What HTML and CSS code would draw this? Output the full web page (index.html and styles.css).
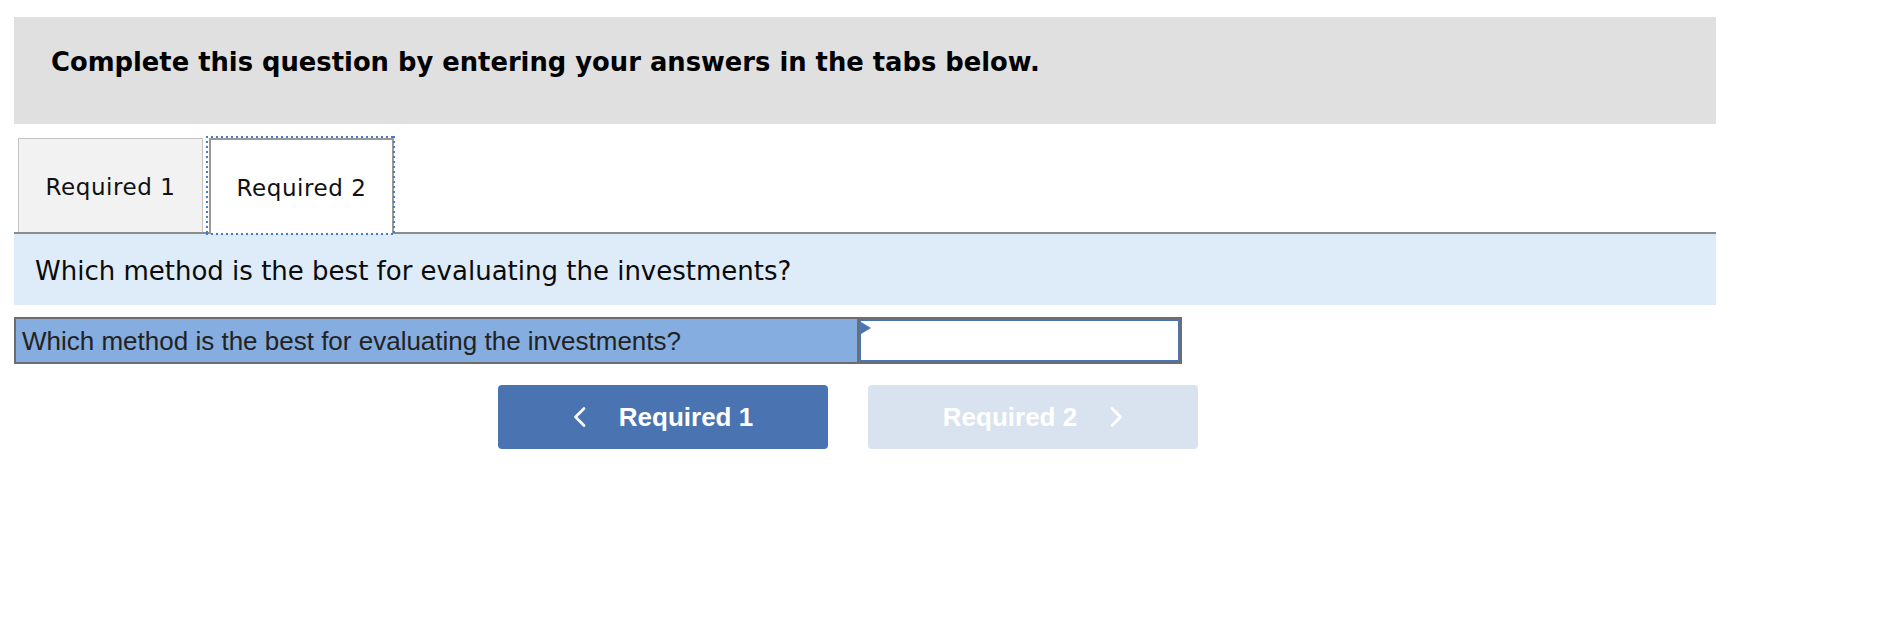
FILE: index.html
```html
<!DOCTYPE html>
<html lang="en">
<head>
<meta charset="utf-8">
<title>Required 2</title>
<link rel="stylesheet" href="styles.css">
</head>
<body>
<div class="page">
  <div class="instructions">Complete this question by entering your answers in the tabs below.</div>

  <div class="tabs">
    <div class="tab">Required 1</div>
    <div class="tab tab-active">Required 2</div>
  </div>

  <div class="prompt">Which method is the best for evaluating the investments?</div>

  <div class="answer-row">
    <div class="answer-label">Which method is the best for evaluating the investments?</div>
    <div class="answer-input"><span class="marker"></span></div>
  </div>

  <div class="nav">
    <button class="nav-btn nav-prev" type="button">
      <svg class="chev" width="13" height="20" viewBox="0 0 13 20"><polyline points="11,1.5 2.5,10 11,18.5" fill="none" stroke="#ffffff" stroke-width="2.6" stroke-linecap="round" stroke-linejoin="round"/></svg>
      <span>Required 1</span>
    </button>
    <button class="nav-btn nav-next" type="button">
      <span>Required 2</span>
      <svg class="chev" width="13" height="20" viewBox="0 0 13 20"><polyline points="2,1.5 10.5,10 2,18.5" fill="none" stroke="#ffffff" stroke-width="2.6" stroke-linecap="round" stroke-linejoin="round"/></svg>
    </button>
  </div>
</div>
</body>
</html>
```

FILE: styles.css
```css
html, body {
  margin: 0;
  padding: 0;
  background: #ffffff;
}

.page {
  padding: 17px 0 0 14px;
  width: 1702px;
}

.instructions {
  box-sizing: border-box;
  height: 107px;
  padding: 30px 0 0 37px;
  background: #e0e0e0;
  font-family: "DejaVu Sans", Verdana, sans-serif;
  font-weight: bold;
  font-size: 25.8px;
  line-height: 30px;
  color: #000000;
}

.tabs {
  margin-top: 14px;
  display: flex;
  align-items: flex-start;
  gap: 6px;
  padding-left: 4px;
  height: 94px;
  border-bottom: 2px solid #8c8c8c;
}

.tab {
  box-sizing: border-box;
  width: 185px;
  height: 94px;
  padding-top: 3px;
  display: flex;
  align-items: center;
  justify-content: center;
  background: #f2f2f2;
  border: 1px solid #c4c4c4;
  border-bottom: none;
  font-family: "DejaVu Sans", Verdana, sans-serif;
  font-size: 23px;
  letter-spacing: 0.55px;
  color: #111111;
}

.tab-active {
  position: relative;
  height: 96px;
  background: #ffffff;
  border: 2px solid #9a9a9a;
  border-bottom: none;
  padding-top: 1px;
}

.tab-active::after {
  content: "";
  position: absolute;
  top: -4px;
  left: -5px;
  right: -3px;
  bottom: -1px;
  background:
    repeating-linear-gradient(to right, #4a7bc8 0 2px, transparent 2px 5px) left top / 100% 2px no-repeat,
    repeating-linear-gradient(to right, #4a7bc8 0 2px, transparent 2px 5px) left bottom / 100% 2px no-repeat,
    repeating-linear-gradient(to bottom, #4a7bc8 0 2px, transparent 2px 5px) left top / 2px 100% no-repeat,
    repeating-linear-gradient(to bottom, #4a7bc8 0 2px, transparent 2px 5px) right top / 2px 100% no-repeat;
}

.prompt {
  box-sizing: border-box;
  height: 71px;
  padding: 22px 0 0 21px;
  background: #deebf8;
  font-family: "DejaVu Sans", Verdana, sans-serif;
  font-size: 26px;
  line-height: 30px;
  color: #0a0a0a;
}

.answer-row {
  box-sizing: border-box;
  margin: 12px 0 0 0;
  width: 1168px;
  height: 47px;
  display: flex;
  border: 2px solid #6d6d6d;
}

.answer-label {
  box-sizing: border-box;
  width: 843px;
  padding: 8px 0 0 6px;
  background: #85ade0;
  border-right: 2px solid #6d6d6d;
  font-family: "Liberation Sans", Arial, sans-serif;
  font-size: 26px;
  line-height: 29px;
  color: #222222;
}

.answer-input {
  box-sizing: border-box;
  position: relative;
  flex: 1;
  background: #ffffff;
  border: 2px solid #4a74b3;
}

.marker {
  position: absolute;
  top: 1px;
  left: 0;
  width: 0;
  height: 0;
  border-left: 10px solid #4a74b3;
  border-top: 6.5px solid transparent;
  border-bottom: 6.5px solid transparent;
}

.nav {
  margin: 21px 0 0 484px;
  display: flex;
  gap: 40px;
}

.nav-btn {
  box-sizing: border-box;
  width: 330px;
  height: 64px;
  margin: 0;
  padding: 0;
  border: none;
  border-radius: 4px;
  display: flex;
  align-items: center;
  justify-content: center;
  gap: 33px;
  font-family: "Liberation Sans", Arial, sans-serif;
  font-weight: bold;
  font-size: 26px;
  color: #ffffff;
}

.nav-prev {
  background: #4a73b2;
}

.nav-next {
  background: #d9e3ef;
}

.chev {
  display: block;
}
```
